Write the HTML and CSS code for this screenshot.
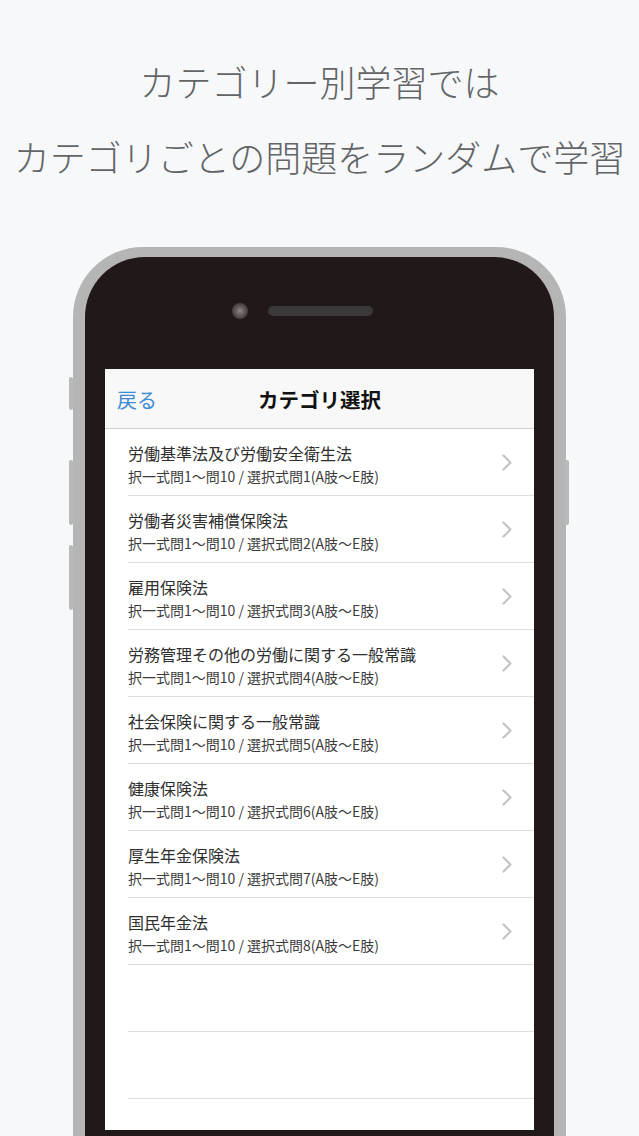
FILE: index.html
```html
<!DOCTYPE html>
<html lang="ja">
<head>
<meta charset="utf-8">
<title>カテゴリ選択</title>
<link rel="stylesheet" href="styles.css">
</head>
<body>
<header class="hero">
  <p class="hero-line">カテゴリー別学習では</p>
  <p class="hero-line">カテゴリごとの問題をランダムで学習</p>
</header>
<div class="phone">
  <span class="btn btn-l1"></span>
  <span class="btn btn-l2"></span>
  <span class="btn btn-l3"></span>
  <span class="btn btn-r1"></span>
  <div class="bezel">
    <div class="sensors">
      <span class="camera"></span>
      <span class="speaker"></span>
    </div>
    <div class="screen">
      <nav class="navbar">
        <span class="back">戻る</span>
        <span class="nav-title">カテゴリ選択</span>
      </nav>
      <ul class="list">
        <li class="row"><div class="row-text"><div class="row-title">労働基準法及び労働安全衛生法</div><div class="row-sub">択一式問1〜問10 / 選択式問1(A肢〜E肢)</div></div><svg class="chev" viewBox="0 0 10 17"><path d="M1.5 1.5 L8.5 8.5 L1.5 15.5"/></svg></li>
        <li class="row"><div class="row-text"><div class="row-title">労働者災害補償保険法</div><div class="row-sub">択一式問1〜問10 / 選択式問2(A肢〜E肢)</div></div><svg class="chev" viewBox="0 0 10 17"><path d="M1.5 1.5 L8.5 8.5 L1.5 15.5"/></svg></li>
        <li class="row"><div class="row-text"><div class="row-title">雇用保険法</div><div class="row-sub">択一式問1〜問10 / 選択式問3(A肢〜E肢)</div></div><svg class="chev" viewBox="0 0 10 17"><path d="M1.5 1.5 L8.5 8.5 L1.5 15.5"/></svg></li>
        <li class="row"><div class="row-text"><div class="row-title">労務管理その他の労働に関する一般常識</div><div class="row-sub">択一式問1〜問10 / 選択式問4(A肢〜E肢)</div></div><svg class="chev" viewBox="0 0 10 17"><path d="M1.5 1.5 L8.5 8.5 L1.5 15.5"/></svg></li>
        <li class="row"><div class="row-text"><div class="row-title">社会保険に関する一般常識</div><div class="row-sub">択一式問1〜問10 / 選択式問5(A肢〜E肢)</div></div><svg class="chev" viewBox="0 0 10 17"><path d="M1.5 1.5 L8.5 8.5 L1.5 15.5"/></svg></li>
        <li class="row"><div class="row-text"><div class="row-title">健康保険法</div><div class="row-sub">択一式問1〜問10 / 選択式問6(A肢〜E肢)</div></div><svg class="chev" viewBox="0 0 10 17"><path d="M1.5 1.5 L8.5 8.5 L1.5 15.5"/></svg></li>
        <li class="row"><div class="row-text"><div class="row-title">厚生年金保険法</div><div class="row-sub">択一式問1〜問10 / 選択式問7(A肢〜E肢)</div></div><svg class="chev" viewBox="0 0 10 17"><path d="M1.5 1.5 L8.5 8.5 L1.5 15.5"/></svg></li>
        <li class="row"><div class="row-text"><div class="row-title">国民年金法</div><div class="row-sub">択一式問1〜問10 / 選択式問8(A肢〜E肢)</div></div><svg class="chev" viewBox="0 0 10 17"><path d="M1.5 1.5 L8.5 8.5 L1.5 15.5"/></svg></li>
        <li class="row row-empty"></li>
        <li class="row row-empty"></li>
      </ul>
    </div>
  </div>
</div>
</body>
</html>
```

FILE: styles.css
```css
* { box-sizing: border-box; }
html, body { margin: 0; padding: 0; }
body {
  background: #f6f8f9;
  font-family: "Noto Sans CJK JP", "Noto Sans", sans-serif;
  width: 639px;
  height: 1136px;
  overflow: hidden;
}
.hero {
  padding-top: 44px;
  height: 247px;
  text-align: center;
}
.hero-line {
  margin: 0;
  font-size: 36px;
  line-height: 75px;
  font-weight: 200;
  color: #626466;
  white-space: nowrap;
}
.phone {
  position: relative;
  margin-left: 73px;
  width: 493px;
  background: #b5b5b5;
  border-radius: 70px 70px 0 0;
  padding: 10px 12px 0 12px;
}
.btn {
  position: absolute;
  width: 4px;
  background: #b9b9b9;
  border-radius: 2px;
}
.btn-l1 { left: -4px; top: 130px; height: 33px; }
.btn-l2 { left: -4px; top: 213px; height: 65px; }
.btn-l3 { left: -4px; top: 298px; height: 65px; }
.btn-r1 { right: -3px; top: 213px; height: 65px; }
.bezel {
  background: #211819;
  border-radius: 60px 60px 0 0;
  padding: 0 20px 6px 20px;
}
.sensors {
  height: 112px;
  padding-top: 46px;
  padding-left: 127px;
  display: flex;
  align-items: flex-start;
  gap: 20px;
}
.camera {
  width: 16px;
  height: 16px;
  border-radius: 50%;
  background: radial-gradient(circle at 50% 50%, #8d8a8b 0%, #5a5556 45%, #2a2223 100%);
}
.speaker {
  width: 105px;
  height: 10px;
  margin-top: 3px;
  border-radius: 5px;
  background: #3b3839;
}
.screen {
  background: #ffffff;
  height: 761px;
  overflow: hidden;
}
.navbar {
  position: relative;
  height: 60px;
  background: #f8f8f8;
  border-bottom: 1px solid #cfd0d2;
  display: flex;
  align-items: center;
  justify-content: center;
}
.back {
  position: absolute;
  left: 12px;
  top: 50%;
  transform: translateY(-50%);
  font-size: 20px;
  color: #3d8bd1;
}
.nav-title {
  font-size: 20.5px;
  font-weight: 700;
  color: #111;
}
.list {
  list-style: none;
  margin: 0;
  padding: 0;
}
.row {
  margin-left: 23px;
  height: 67px;
  border-bottom: 1px solid #dedee0;
  display: flex;
  align-items: center;
  padding-right: 22px;
}
.row-text {
  flex: 1;
  padding-top: 7px;
}
.row-title {
  font-size: 16px;
  line-height: 21px;
  color: #2e2e2e;
  white-space: nowrap;
}
.row-sub {
  font-size: 14px;
  line-height: 24px;
  color: #3c3c3c;
  white-space: nowrap;
}
.chev {
  width: 10px;
  height: 17px;
  fill: none;
  stroke: #c4c4c8;
  stroke-width: 2.2;
  stroke-linecap: round;
  stroke-linejoin: round;
}
```
